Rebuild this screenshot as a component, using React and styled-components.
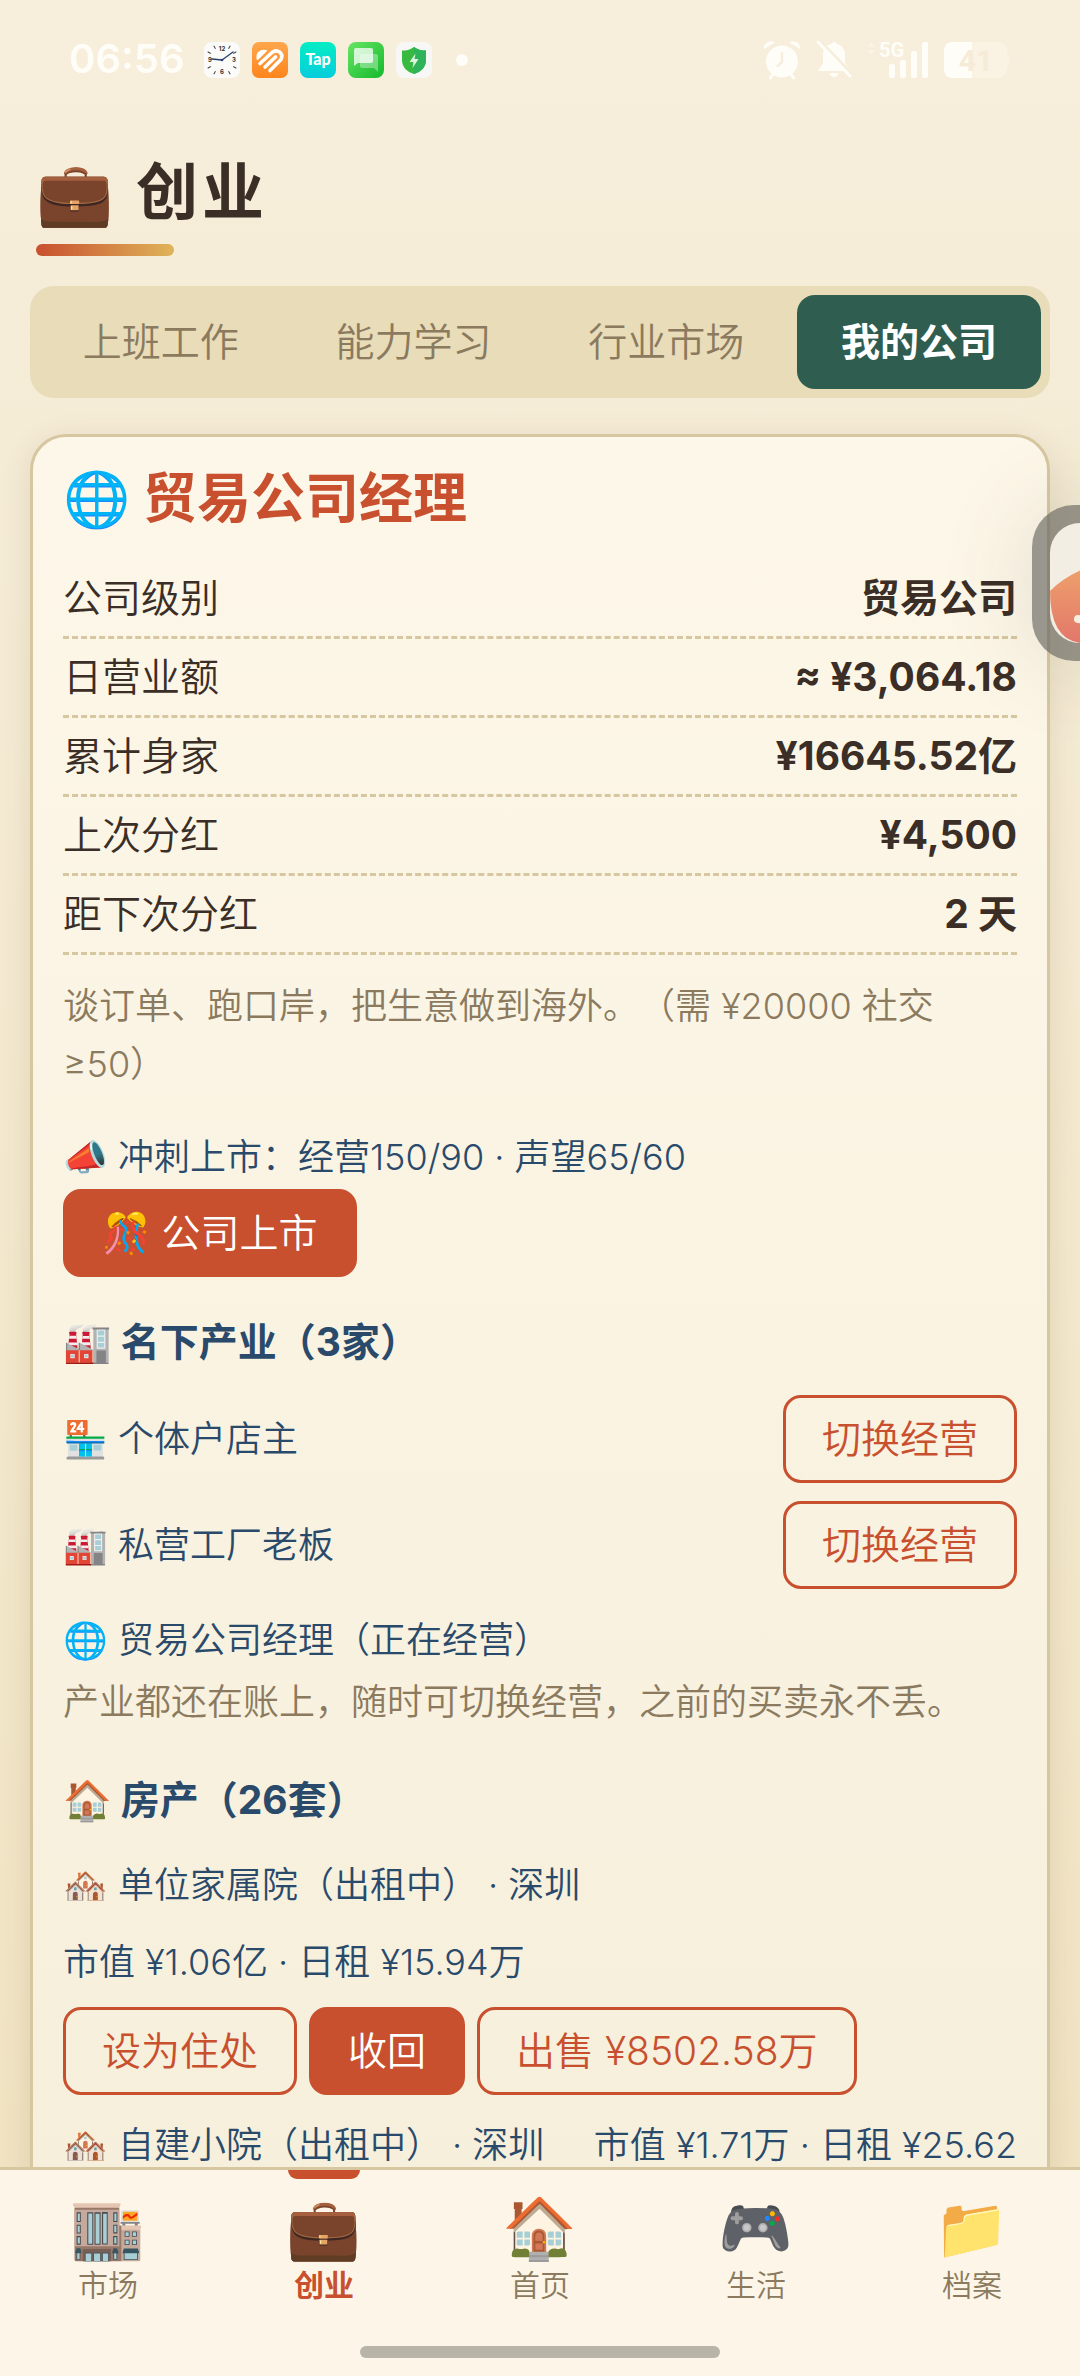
import React, { useState } from "react";
import styled, { createGlobalStyle } from "styled-components";

const tabs = ["上班工作", "能力学习", "行业市场", "我的公司"];

const stats = [
  { label: "公司级别", value: "贸易公司" },
  { label: "日营业额", value: "≈ ¥3,064.18" },
  { label: "累计身家", value: "¥16645.52亿" },
  { label: "上次分红", value: "¥4,500" },
  { label: "距下次分红", value: "2 天" },
];

const businesses = [
  { id: "shop", name: "🏪 个体户店主" },
  { id: "factory", name: "🏭 私营工厂老板" },
];

const navItems = [
  { id: "market", icon: "🏬", label: "市场" },
  { id: "career", icon: "💼", label: "创业" },
  { id: "home", icon: "🏠", label: "首页" },
  { id: "life", icon: "🎮", label: "生活" },
  { id: "archive", icon: "📁", label: "档案" },
];

const ClockIcon = () => (
  <svg width="36" height="36" viewBox="0 0 36 36">
    <rect width="36" height="36" rx="8" fill="#fbfbfa" />
    {[30, 60, 120, 150, 210, 240, 300, 330].map((a) => (
      <path key={a} d="M18 1.5V5" stroke="#444" strokeWidth="1" transform={`rotate(${a} 18 18)`} />
    ))}
    <g fontFamily="Inter, sans-serif" fontSize="6" fontWeight="700" fill="#333" textAnchor="middle">
      <text x="18" y="9">12</text>
      <text x="30" y="20">3</text>
      <text x="18" y="32">6</text>
      <text x="6" y="20">9</text>
    </g>
    <path d="M18 18L29 10M18 18L8 17" stroke="#27406f" strokeWidth="1.3" strokeLinecap="round" />
    <circle cx="18" cy="18" r="1.3" fill="#27406f" />
  </svg>
);

const HeartIcon = () => (
  <svg width="36" height="36" viewBox="0 0 36 36">
    <defs>
      <linearGradient id="heartBg" x1="0" y1="0" x2="0" y2="1">
        <stop offset="0" stopColor="#ffa64d" />
        <stop offset="1" stopColor="#fd851c" />
      </linearGradient>
    </defs>
    <rect width="36" height="36" rx="7" fill="url(#heartBg)" />
    <path d="M4.500 17C3.500 10 9 6 15.500 8.500L6.500 17.500Q5 18.500 4.500 17z" fill="#fff" />
    <g fill="none" stroke="#fff" strokeWidth="3.600" strokeLinecap="round">
      <path d="M8 21.500L20 10.500C25 6.500 32 11 29 17.500L18 28.500" />
      <path d="M13 25L23.500 15" />
    </g>
  </svg>
);

const TapIcon = () => (
  <svg width="36" height="36" viewBox="0 0 36 36">
    <defs>
      <linearGradient id="tapBg" x1="0" y1="0" x2="0" y2="1">
        <stop offset="0" stopColor="#05edc4" />
        <stop offset="1" stopColor="#06cddd" />
      </linearGradient>
    </defs>
    <rect width="36" height="36" rx="8" fill="url(#tapBg)" />
    <text x="18" y="23" fontFamily="Lato, sans-serif" fontSize="16" fontWeight="900" fill="#fff" textAnchor="middle">Tap</text>
  </svg>
);

const ChatIcon = () => (
  <svg width="36" height="36" viewBox="0 0 36 36">
    <defs>
      <linearGradient id="chatBg" x1="0" y1="0" x2="1" y2="1">
        <stop offset="0" stopColor="#68e565" />
        <stop offset="1" stopColor="#12b92c" />
      </linearGradient>
    </defs>
    <rect width="36" height="36" rx="8" fill="url(#chatBg)" />
    <path d="M14 12h14q2 0 2 2v16l-4-4H14q-2 0-2-2V14q0-2 2-2z" fill="#fff" opacity=".35" />
    <path d="M8 6h15q2 0 2 2v11q0 2-2 2H10l-4 3V8q0-2 2-2z" fill="#fff" opacity=".75" />
  </svg>
);

const ShieldIcon = () => (
  <svg width="36" height="36" viewBox="0 0 36 36">
    <rect width="36" height="36" rx="8" fill="#f7f8f6" />
    <path d="M18 5c4 3 8 3.500 12 3.500V18c0 7-5 12-12 14C11 30 6 25 6 18V8.500C10 8.500 14 8 18 5z" fill="#38b93f" />
    <path d="M18 5c4 3 8 3.500 12 3.500V18c0 7-5 12-12 14z" fill="#2eb25a" />
    <path d="M19.500 11.500L13.500 20H17.500L16.500 26L22.500 17H18.500Z" fill="#dff5dd" />
  </svg>
);

const AlarmIcon = () => (
  <svg width="38" height="40" viewBox="0 0 38 40">
    <g stroke="#fffdf8" strokeWidth="3" strokeLinecap="round">
      <path d="M10 34L7.500 38M28 34L30.500 38" />
    </g>
    <circle cx="19" cy="21.500" r="16" fill="#fffdf8" />
    <path d="M1 9C0 3 7-1 12 2.500zM37 9C38 3 31-1 26 2.500z" fill="#fffdf8" />
    <path d="M19 13V22L14.500 26" fill="none" stroke="#f6edda" strokeWidth="2.500" strokeLinecap="round" />
  </svg>
);

const BellOffIcon = () => (
  <svg width="36" height="40" viewBox="0 0 36 40">
    <path d="M18 2q2 0 2.500 2C26 5 29 9 29 14v9l5 8H2l5-8v-9C7 9 10 5 15.500 4Q16 2 18 2zM13.500 33h9q-1 4-4.500 4t-4.500-4z" fill="#fffdf8" />
    <path d="M3 0L36 34" stroke="#f6edda" strokeWidth="3" />
    <path d="M2 2L34 36" stroke="#fffdf8" strokeWidth="3" strokeLinecap="round" />
  </svg>
);

const SignalIcon = () => (
  <svg width="62" height="52" viewBox="0 -6 62 52">
    <path d="M0 7L4 2L8 7zM0 10L4 15L8 10z" fill="#fbf4e6" />
    <text x="12" y="17" fontFamily="Roboto, sans-serif" fontSize="20" fontWeight="700" fill="#fffdf8">5G</text>
    <rect x="22" y="24" width="6" height="14" rx="2" fill="#fffdf8" />
    <rect x="33" y="20" width="6" height="18" rx="2" fill="#fffdf8" />
    <rect x="44" y="11" width="6" height="27" rx="2" fill="#fffdf8" />
    <rect x="55" y="2" width="6" height="36" rx="2" fill="#fffdf8" />
  </svg>
);

const BatteryIcon = () => (
  <svg width="66" height="36" viewBox="0 0 66 36">
    <rect width="63" height="36" rx="9" fill="#faf2e3" />
    <path d="M9 0H28V36H9Q0 36 0 27V9Q0 0 9 0z" fill="#fffdf8" />
    <path d="M63 12q3 0 3 6t-3 6z" fill="#faf2e3" />
    <text x="32" y="29" fontFamily="Roboto, sans-serif" fontSize="30" fontWeight="700" fill="#f5ebd7" textAnchor="middle">41</text>
  </svg>
);

const App = () => {
  const [activeTab, setActiveTab] = useState("我的公司");
  const [activeNav, setActiveNav] = useState("career");

  return (
    <Page>
      <GlobalStyle />
      <StatusBar>
        <Time>06:56</Time>
        <AppIcons>
          <ClockIcon />
          <HeartIcon />
          <TapIcon />
          <ChatIcon />
          <ShieldIcon />
        </AppIcons>
        <Dot />
        <SystemIcons>
          <AlarmIcon />
          <BellOffIcon />
          <SignalIcon />
          <BatteryIcon />
        </SystemIcons>
      </StatusBar>

      <Content>
        <PageTitle>💼 创业</PageTitle>
        <Tabs>
          {tabs.map((tab) => (
            <Tab key={tab} $active={tab === activeTab} onClick={() => setActiveTab(tab)}>
              {tab}
            </Tab>
          ))}
        </Tabs>

        <Card>
          <CardTitle>🌐 贸易公司经理</CardTitle>
          {stats.map((stat) => (
            <StatRow key={stat.label}>
              <span>{stat.label}</span>
              <StatValue>{stat.value}</StatValue>
            </StatRow>
          ))}
          <Description>谈订单、跑口岸，把生意做到海外。（需 ¥20000 社交≥50）</Description>

          <Goal>📣 冲刺上市：经营150/90 · 声望65/60</Goal>
          <Button $primary>🎊 公司上市</Button>

          <SectionTitle>🏭 名下产业（3家）</SectionTitle>
          <BusinessList>
            {businesses.map((business) => (
              <BusinessRow key={business.id}>
                <span>{business.name}</span>
                <Button>切换经营</Button>
              </BusinessRow>
            ))}
            <Line>🌐 贸易公司经理（正在经营）</Line>
          </BusinessList>
          <Note>产业都还在账上，随时可切换经营，之前的买卖永不丢。</Note>

          <SectionTitle>🏠 房产（26套）</SectionTitle>
          <HouseLine>🏘️ 单位家属院（出租中） · 深圳</HouseLine>
          <HouseLine>市值 ¥1.06亿 · 日租 ¥15.94万</HouseLine>
          <Actions>
            <Button>设为住处</Button>
            <Button $primary>收回</Button>
            <Button>出售 ¥8502.58万</Button>
          </Actions>
          <HouseRow>
            <span>🏘️ 自建小院（出租中） · 深圳</span>
            <span>市值 ¥1.71万 · 日租 ¥25.62</span>
          </HouseRow>
        </Card>
      </Content>

      <FloatingBall aria-label="悬浮球">
        <svg width="120" height="120" viewBox="0 0 120 120">
          <defs>
            <linearGradient id="ballFill" x1="0" y1="0" x2="0" y2="1">
              <stop offset="0" stopColor="#efa36c" />
              <stop offset="1" stopColor="#e2776a" />
            </linearGradient>
          </defs>
          <rect width="120" height="120" rx="30" fill="#f2eee4" />
          <path d="M0 68Q14 54 36 45L120 40V90Q120 120 90 120H30Q0 116 0 68z" fill="url(#ballFill)" />
          <path d="M28 96L60 100" stroke="#f8efe2" strokeWidth="8" strokeLinecap="round" />
        </svg>
      </FloatingBall>

      <BottomNav>
        <NavList>
          {navItems.map((item) => (
            <NavItem key={item.id} $active={item.id === activeNav} onClick={() => setActiveNav(item.id)}>
              <NavIcon>{item.icon}</NavIcon>
              <span>{item.label}</span>
            </NavItem>
          ))}
        </NavList>
        <HomeBar />
      </BottomNav>
    </Page>
  );
};

const GlobalStyle = createGlobalStyle`
  * {
    box-sizing: border-box;
  }
  body {
    margin: 0;
    font-family: Inter, "Noto Sans CJK SC", "Noto Color Emoji", sans-serif;
    font-weight: 350;
    color: #3a2e26;
    text-spacing-trim: space-all;
  }
  button {
    font: inherit;
    cursor: pointer;
  }
`;

const Page = styled.div`
  position: relative;
  display: flex;
  flex-direction: column;
  height: 100vh;
  overflow: hidden;
  background: linear-gradient(180deg, #f7eedc 0%, #f5ecd6 20%, #f0e2c0 100%);
`;

const StatusBar = styled.header`
  display: flex;
  align-items: center;
  height: 120px;
  padding: 0 70px 0 69px;
  flex-shrink: 0;
`;

const Time = styled.span`
  font-size: 40px;
  line-height: 40px;
  padding-bottom: 3px;
  font-weight: 600;
  color: #fffdf8;
`;

const AppIcons = styled.div`
  display: flex;
  gap: 12px;
  margin-left: 20px;
`;

const Dot = styled.span`
  width: 12px;
  height: 12px;
  margin-left: 24px;
  border-radius: 50%;
  background: #fffdf8;
`;

const SystemIcons = styled.div`
  display: flex;
  align-items: center;
  gap: 15px;
  margin-left: auto;
`;

const Content = styled.main`
  flex: 1;
  min-height: 0;
  padding: 0 30px;
  overflow: hidden;
`;

const PageTitle = styled.h1`
  margin: 28px 6px 30px;
  font-size: 62px;
  line-height: 90px;
  font-weight: 700;
  letter-spacing: 4px;

  &::after {
    content: "";
    display: block;
    width: 138px;
    height: 12px;
    margin-top: 6px;
    border-radius: 6px;
    background: linear-gradient(90deg, #c8502e, #dfb45a);
  }
`;

const Tabs = styled.div`
  display: flex;
  gap: 9px;
  padding: 9px;
  border-radius: 24px;
  background: #e8dcb9;
`;

const Tab = styled.button`
  flex: 1;
  height: 94px;
  padding: 0;
  border: none;
  border-radius: 18px;
  font-size: 39px;
  line-height: 58px;
  font-weight: ${(props) => (props.$active ? 700 : 350)};
  color: ${(props) => (props.$active ? "#fff" : "#8b7a5e")};
  background: ${(props) => (props.$active ? "#2f5d50" : "transparent")};
`;

const Card = styled.section`
  margin-top: 36px;
  padding: 24px 30px;
  border: 3px solid #d7c7a0;
  border-radius: 36px;
  background: linear-gradient(180deg, #fdf7e9, #f6efdb);
  box-shadow: 0 6px 30px rgba(90, 60, 20, 0.12);
`;

const CardTitle = styled.h2`
  margin: 0 0 24px;
  font-size: 54px;
  line-height: 75px;
  font-weight: 700;
  color: #c8502e;
`;

const StatRow = styled.div`
  display: flex;
  justify-content: space-between;
  font-size: 39px;
  line-height: 76px;
  border-bottom: 3px dashed #d7c7a0;
`;

const StatValue = styled.span`
  font-weight: 700;
`;

const Description = styled.p`
  margin: 22px 0 32px;
  font-size: 36px;
  line-height: 58px;
  color: #8b7a5e;
`;

const Line = styled.div`
  font-size: 36px;
  line-height: 66px;
  color: #2a4a6b;
`;

const Goal = styled(Line)`
  line-height: 64px;
`;

const Button = styled.button`
  height: 88px;
  padding: 0 36px;
  border: 3px solid #c8502e;
  border-radius: 18px;
  font-size: 39px;
  line-height: 58px;
  color: ${(props) => (props.$primary ? "#fff" : "#c8502e")};
  background: ${(props) => (props.$primary ? "#c8502e" : "transparent")};
`;

const SectionTitle = styled.h3`
  margin: 36px 0 18px;
  font-size: 39px;
  line-height: 58px;
  font-weight: 700;
  color: #2a4a6b;
`;

const BusinessList = styled.div`
  padding-top: 6px;
`;

const BusinessRow = styled(Line)`
  display: flex;
  align-items: center;
  justify-content: space-between;
  margin-bottom: 18px;
`;

const Note = styled.p`
  margin: 0 0 40px;
  font-size: 36px;
  line-height: 58px;
  color: #8b7a5e;
`;

const HouseLine = styled(Line)`
  line-height: 77px;
`;

const Actions = styled.div`
  display: flex;
  gap: 12px;
  margin: 6px 0 12px;
`;

const HouseRow = styled(HouseLine)`
  display: flex;
  justify-content: space-between;
  white-space: nowrap;
`;

// half hidden behind the right edge of the screen
const FloatingBall = styled.button`
  position: absolute;
  top: 505px;
  right: -108px;
  display: flex;
  padding: 18px;
  border: none;
  border-radius: 42px;
  background: rgba(100, 98, 92, 0.65);
  box-shadow: 0 0 90px rgba(90, 80, 60, 0.15);
`;

const BottomNav = styled.nav`
  flex-shrink: 0;
  height: 209px;
  border-top: 3px solid #d7c7a0;
  background: #fdf6e8;
`;

const NavList = styled.div`
  display: flex;
`;

const NavItem = styled.button`
  position: relative;
  flex: 1;
  display: flex;
  flex-direction: column;
  align-items: center;
  gap: 4px;
  height: 176px;
  padding: 24px 0 0;
  border: none;
  background: transparent;
  font-size: 30px;
  line-height: 42px;
  font-weight: ${(props) => (props.$active ? 700 : 350)};
  color: ${(props) => (props.$active ? "#c8502e" : "#8b7a5e")};

  &::before {
    content: "";
    display: ${(props) => (props.$active ? "block" : "none")};
    position: absolute;
    top: 0;
    width: 72px;
    height: 9px;
    border-radius: 0 0 9px 9px;
    background: #c8502e;
  }
`;

const NavIcon = styled.span`
  font-size: 60px;
  line-height: 66px;
`;

const HomeBar = styled.div`
  width: 360px;
  height: 12px;
  margin: 0 auto;
  border-radius: 6px;
  background: #b9b4a8;
`;

export default App;
